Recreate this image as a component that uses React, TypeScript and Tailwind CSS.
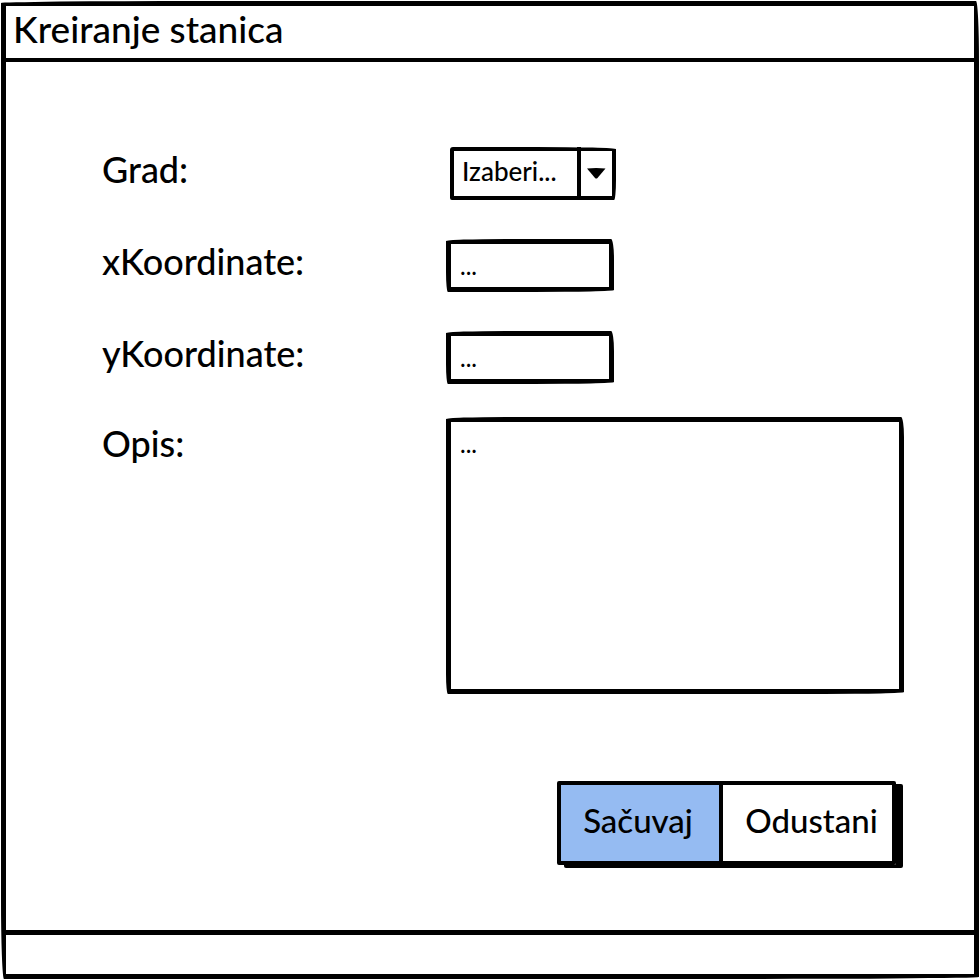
import { useState } from "react";

const fieldClass =
  "block rounded-[60px_3px_80px_2px/2px_20px_2px_20px] border-[5px] border-black bg-white px-[9px] text-2xl text-black outline-none placeholder:text-black placeholder:opacity-100";

const labelClass = "text-[36px] leading-[44px]";

export default function App() {
  const [city, setCity] = useState("");

  return (
    <div className="min-h-screen bg-white p-px font-['Lato',sans-serif] font-medium text-black">
      <main className="flex min-h-[calc(100vh-2px)] flex-col rounded-[200px_3px_300px_3px/2px_60px_2px_80px] border-[5px] border-black">
        <header className="border-b-4 border-black px-[7px] pt-px pb-[7px]">
          <h1 className="text-[37px] leading-[44px]">Kreiranje stanica</h1>
        </header>

        <form
          className="flex grow flex-col pt-[85px] pr-[70px] pl-24"
          onSubmit={(event) => event.preventDefault()}
        >
          <div className="grid grid-cols-[344px_1fr] gap-y-[39px]">
            <label htmlFor="grad" className={labelClass}>
              Grad:
            </label>
            <div className="relative ml-1 h-[53px] w-[166px]">
              <select
                id="grad"
                value={city}
                onChange={(event) => setCity(event.target.value)}
                className="h-full w-full appearance-none rounded-[3px_80px_2px_2px/3px_2px_20px_2px] border-4 border-black bg-white pr-9 pb-1 pl-2 text-[26px] text-black outline-none"
              >
                <option value="">Izaberi...</option>
              </select>
              <span className="pointer-events-none absolute inset-y-0 right-1 flex w-[35px] items-center justify-center border-l-4 border-black">
                <svg width="19" height="11" viewBox="0 0 19 11" aria-hidden="true">
                  <path d="M0 0.5 Q9 -0.3 18.5 0.5 L10.5 10 Q9.3 11 8 10 Z" fill="black" />
                </svg>
              </span>
            </div>

            <label htmlFor="x" className={labelClass}>
              xKoordinate:
            </label>
            <input id="x" type="text" placeholder="..." className={`${fieldClass} h-[53px] w-[168px]`} />

            <label htmlFor="y" className={labelClass}>
              yKoordinate:
            </label>
            <input id="y" type="text" placeholder="..." className={`${fieldClass} h-[53px] w-[168px]`} />
          </div>

          <div className="mt-[33px] grid grid-cols-[344px_1fr]">
            <label htmlFor="opis" className={`${labelClass} pt-1`}>
              Opis:
            </label>
            <textarea
              id="opis"
              placeholder="..."
              className={`${fieldClass} h-[277px] w-full resize-none pt-1.5`}
            />
          </div>

          <div className="mt-[87px] mb-16 flex justify-end pr-2">
            <div className="flex h-[84px] rounded-[2px] border-4 border-black shadow-[7px_3px_0_0_#000]">
              <button type="submit" className="w-[158px] bg-[#95bbf2] pr-1 pb-1 text-[33px]">
                Sačuvaj
              </button>
              <button type="button" className="w-[173px] border-l-4 border-black bg-white pb-1 pl-2 text-[33px]">
                Odustani
              </button>
            </div>
          </div>
        </form>

        <footer className="h-11 border-t-[5px] border-black" />
      </main>
    </div>
  );
}
